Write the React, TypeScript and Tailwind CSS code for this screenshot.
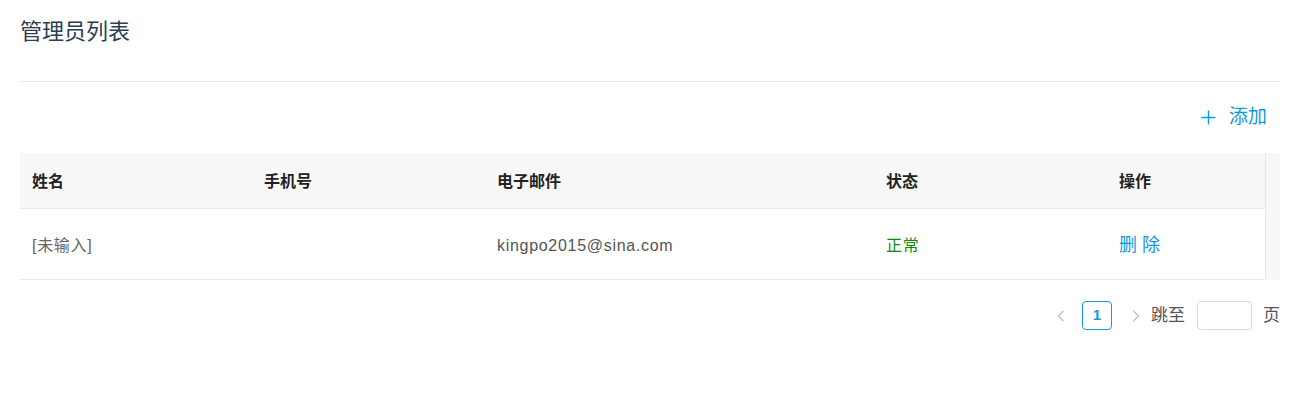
const font = '"Liberation Sans", "Noto Sans CJK SC", sans-serif';

const columns = [
  { title: "姓名", w: "w-[232px]" },
  { title: "手机号", w: "w-[233px]" },
  { title: "电子邮件", w: "w-[389px]" },
  { title: "状态", w: "w-[233px]" },
  { title: "操作", w: "flex-1" },
];

const admins = [
  { name: "[未输入]", phone: "", email: "kingpo2015@sina.com", status: "正常" },
];

const App = () => {
  return (
    <div className="px-5 bg-white min-h-[401px]" style={{ fontFamily: font }}>
      <div className="h-[81px] pt-[17px]">
        <h1 className="text-[22px] leading-[30px] text-[#2c3e50]">管理员列表</h1>
      </div>
      <div className="border-t border-[#e8e8e8]" />

      <div className="h-[71px] flex items-center justify-end pr-[13px] text-[#0e9ae0]">
        <button className="flex items-center gap-[13px] text-[19px]">
          <svg width="15" height="15" viewBox="0 0 15 15" fill="none" stroke="currentColor" strokeWidth="1.4">
            <path d="M7.5 0.5v14M0.5 7.5h14" />
          </svg>
          <span>添加</span>
        </button>
      </div>

      <div className="flex">
        <div className="flex-1 border-r border-[#e8e8e8]">
          <div className="flex h-[56px] items-center pt-[2px] bg-[#f8f8f8] border-b border-[#e8e8e8]">
            {columns.map((c) => (
              <div key={c.title} className={`${c.w} px-3 text-[16px] font-bold text-[#222]`}>
                {c.title}
              </div>
            ))}
          </div>
          {admins.map((a, i) => (
            <div key={i} className="flex h-[71px] items-center pt-[3px] border-b border-[#e8e8e8] text-[16px] tracking-[0.7px]">
              <div className="w-[232px] px-3 text-[#666]">{a.name}</div>
              <div className="w-[233px] px-3 text-[#555]">{a.phone}</div>
              <div className="w-[389px] px-3 text-[#555]">{a.email}</div>
              <div className="w-[233px] px-3 text-[#118811]">{a.status}</div>
              <div className="flex-1 px-3">
                <a className="text-[#0e9ae0] text-[18px] tracking-[5px] cursor-pointer">删除</a>
              </div>
            </div>
          ))}
        </div>
        <div className="w-[14px] bg-[#f8f8f8]" />
      </div>

      <div className="flex items-center justify-end mt-[21px] h-[29px] text-[14px] text-[#555]">
        <svg width="8" height="12" viewBox="0 0 8 12" fill="none" stroke="#c0c0c0" strokeWidth="1.3">
          <path d="M6.5 1L1.5 6l5 5" />
        </svg>
        <div className="ml-[17px] w-[30px] h-[29px] border border-[#0e9ae0] rounded-[4px] flex items-center justify-center text-[#0e9ae0] text-[15px] font-bold">
          1
        </div>
        <svg className="ml-[20px]" width="8" height="12" viewBox="0 0 8 12" fill="none" stroke="#c0c0c0" strokeWidth="1.3">
          <path d="M1.5 1l5 5-5 5" />
        </svg>
        <span className="ml-[11px] text-[17px]">跳至</span>
        <input className="ml-[12px] w-[55px] h-[29px] border border-[#d9d9d9] rounded-[4px] outline-none" />
        <span className="ml-[11px] text-[17px]">页</span>
      </div>
    </div>
  );
};

export default App;
